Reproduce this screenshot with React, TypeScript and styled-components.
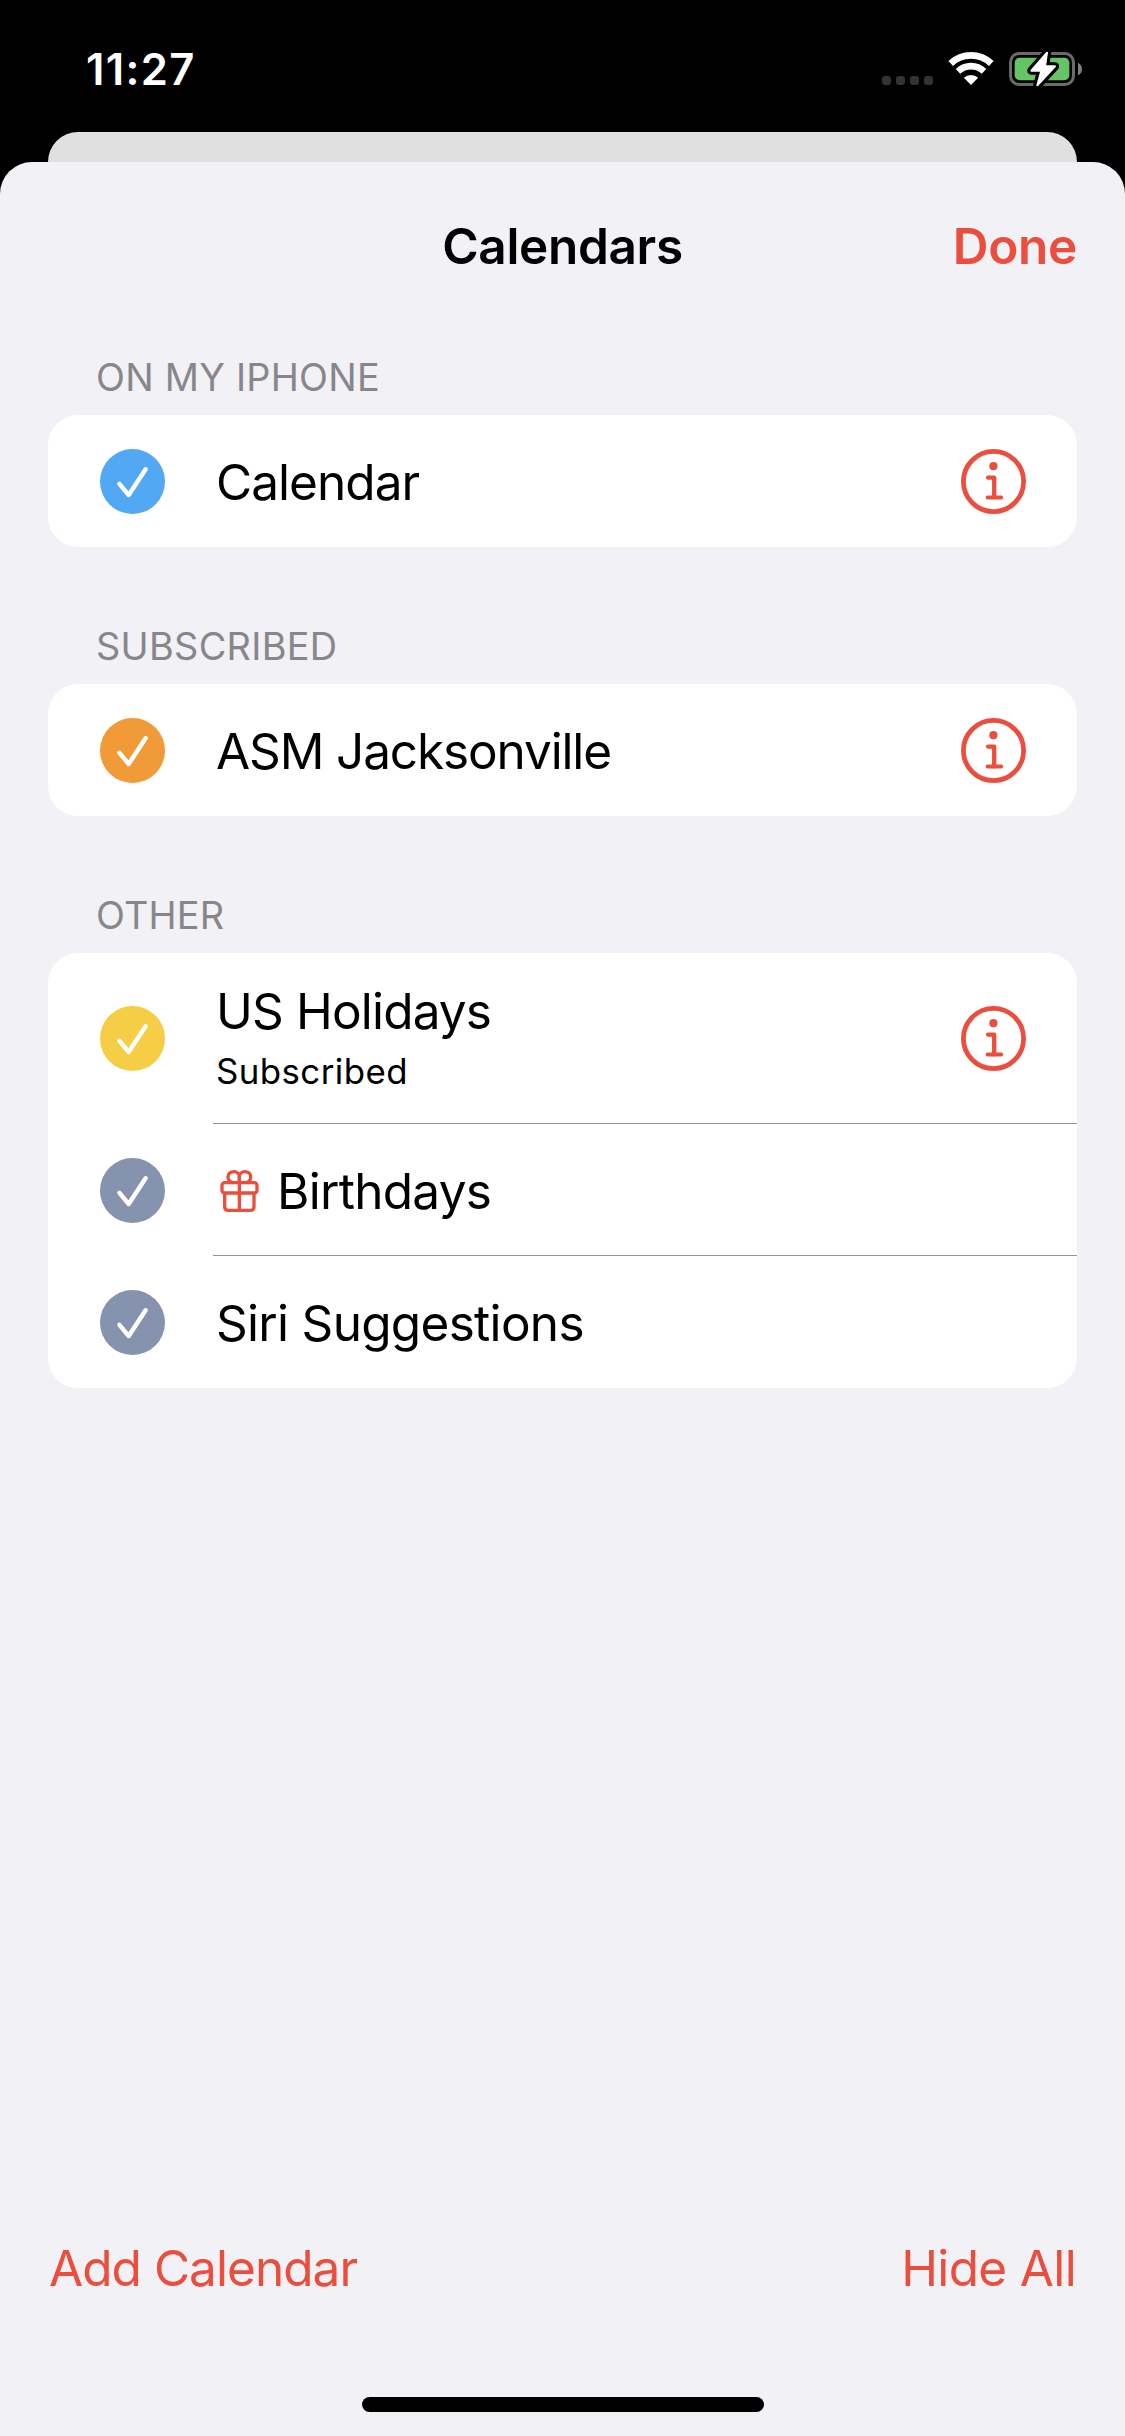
import React from "react";
import styled, { createGlobalStyle } from "styled-components";

const color = {
  accent: "#eb4e3d",
  sheet: "#f1f1f6",
  backCard: "#e0e0e0",
  card: "#ffffff",
  label: "#87868b",
  separator: "#949497",
};

const GlobalStyle = createGlobalStyle`
  * { box-sizing: border-box; }
  body {
    margin: 0;
    background: #000;
    font-family: Inter, "Liberation Sans", sans-serif;
  }
  button {
    border: 0;
    padding: 0;
    background: none;
    font-family: inherit;
    cursor: pointer;
  }
  svg { display: block; flex: none; }
`;

const Screen = styled.div`
  display: flex;
  flex-direction: column;
  width: 1125px;
  height: 2436px;
  overflow: hidden;
  background: #000;
`;

const StatusBar = styled.header`
  display: flex;
  justify-content: space-between;
  align-items: flex-start;
  height: 132px;
  padding: 43px 39px 0 86px;
`;

const Time = styled.time`
  color: #fff;
  font-size: 43.6px;
  font-weight: 600;
  line-height: 53px;
  letter-spacing: 1.35px;
`;

const StatusIcons = styled.div`
  display: flex;
  align-items: flex-start;
  padding-top: 5px;
`;

const SignalDots = styled.div`
  display: flex;
  gap: 5px;
  margin: 28px 15px 0 0;
`;

const Dot = styled.span`
  width: 9px;
  height: 9px;
  border-radius: 3px;
  background: #333;
`;

const WifiSlot = styled.div`
  padding-top: 4px;
  margin-right: 12px;
`;

const BackCard = styled.div`
  flex: none;
  height: 30px;
  margin: 0 48px;
  border-radius: 30px 30px 0 0;
  background: ${color.backCard};
`;

const Sheet = styled.main`
  flex: 1;
  display: flex;
  flex-direction: column;
  border-radius: 32px 32px 0 0;
  background: ${color.sheet};
`;

const SheetHeader = styled.div`
  display: grid;
  grid-template-columns: 1fr auto 1fr;
  padding: 54px 48px 0;
  margin-bottom: 78px;
`;

const Title = styled.h1`
  grid-column: 2;
  margin: 0;
  font-size: 49.5px;
  font-weight: 600;
  line-height: 60px;
  letter-spacing: -0.33px;
`;

const TextButton = styled.button<{ $strong?: boolean; $tracking: number }>`
  justify-self: end;
  color: ${color.accent};
  font-size: 49.5px;
  font-weight: ${(p) => (p.$strong ? 600 : 400)};
  line-height: 60px;
  letter-spacing: ${(p) => p.$tracking}px;
`;

const Sections = styled.div`
  flex: 1;
  display: flex;
  flex-direction: column;
  gap: 76px;
  padding: 0 48px;
`;

const SectionLabel = styled.h2<{ $tracking: number }>`
  margin: 0 0 15px;
  padding-left: 48px;
  color: ${color.label};
  font-size: 37.8px;
  font-weight: 400;
  line-height: 46px;
  letter-spacing: ${(p) => p.$tracking}px;
`;

const Card = styled.ul`
  margin: 0;
  padding: 0;
  list-style: none;
  border-radius: 30px;
  overflow: hidden;
  background: ${color.card};
`;

const RowContent = styled.div`
  flex: 1;
  display: flex;
  align-items: center;
  padding: 0 51px 0 3px;
`;

const Row = styled.li<{ $tall?: boolean }>`
  display: flex;
  height: ${(p) => (p.$tall ? 171 : 132)}px;
  padding-left: 52px;

  & > ${RowContent} {
    padding-top: ${(p) => (p.$tall ? 0 : 1)}px;
  }

  &:not(:last-child) > ${RowContent} {
    box-shadow: inset 0 -1px 0 ${color.separator};
  }
`;

const CheckSlot = styled.div<{ $tall?: boolean }>`
  display: flex;
  align-items: center;
  width: 113px;
  padding-top: ${(p) => (p.$tall ? 0 : 1)}px;
`;

const CheckCircle = styled.span<{ $fill: string }>`
  width: 65px;
  height: 65px;
  border-radius: 50%;
  background: ${(p) => p.$fill};
`;

const Texts = styled.div<{ $tall?: boolean }>`
  flex: 1;
  display: flex;
  flex-direction: column;
  gap: 9px;
  margin: ${(p) => (p.$tall ? "0 0 4px" : "1px 0 0")};
`;

const Name = styled.span<{ $tracking: number }>`
  display: flex;
  align-items: center;
  gap: 18px;
  font-size: 49.5px;
  line-height: 60px;
  letter-spacing: ${(p) => p.$tracking}px;
  white-space: nowrap;
`;

const Detail = styled.span`
  font-size: 34.8px;
  line-height: 42px;
  letter-spacing: 0.45px;
`;

const GiftSlot = styled.span`
  margin: 0 0 1px 3px;
`;

const Footer = styled.footer`
  display: flex;
  justify-content: space-between;
  padding: 0 49px;
`;

const HomeIndicator = styled.div`
  align-self: center;
  width: 402px;
  height: 15px;
  margin: 99px 0 24px;
  border-radius: 8px;
  background: #000;
`;

const WifiIcon = () => (
  <svg width="46" height="33" viewBox="0 0 46 33" fill="none">
    <path d="M2.7 11.5 A29.6 29.6 0 0 1 43.3 11.5" stroke="#fff" strokeWidth="6.8" />
    <path d="M10 19.3 A18.9 18.9 0 0 1 36 19.3" stroke="#fff" strokeWidth="6.6" />
    <path d="M23 33 L15.9 25.8 A10.2 10.2 0 0 1 30.1 25.8 Z" fill="#fff" />
  </svg>
);

const BatteryIcon = () => (
  <svg width="80" height="42" viewBox="0 0 240 126" fill="none">
    <rect x="13.5" y="16.5" width="189" height="93" rx="26" stroke="#6b6b6b" strokeWidth="9" />
    <rect x="26" y="29" width="164" height="68" rx="15" fill="#65c466" />
    <path d="M216 44 C224 48 228 55 228 63 C228 71 224 78 216 82 Z" fill="#808080" />
    <path
      d="M123 14 L76 68 H106 L94 112 L147 55 H117 Z"
      fill="#000"
      stroke="#000"
      strokeWidth="25"
      strokeLinejoin="round"
    />
    <path
      d="M123 14 L76 68 H106 L94 112 L147 55 H117 Z"
      fill="#fff"
      stroke="#fff"
      strokeWidth="6"
      strokeLinejoin="round"
    />
  </svg>
);

const CheckIcon = () => (
  <svg width="65" height="65" viewBox="0 0 65 65" fill="none">
    <path
      d="M19.4 34.8 L28.7 46 L45.6 20.2"
      stroke="#fff"
      strokeWidth="4.4"
      strokeLinecap="round"
      strokeLinejoin="round"
    />
  </svg>
);

const InfoIcon = () => (
  <svg width="65" height="65" viewBox="0 0 65 65" fill="none" stroke={color.accent}>
    <circle cx="32.5" cy="32.5" r="30.1" strokeWidth="4.8" />
    <circle cx="32.4" cy="17.2" r="4.1" fill={color.accent} stroke="none" />
    <path d="M27 28.6 H33.2 V48.4" strokeWidth="4.3" strokeLinecap="round" strokeLinejoin="round" />
    <path d="M26.6 48.5 H40.1" strokeWidth="4" strokeLinecap="round" />
  </svg>
);

const GiftIcon = () => (
  <svg width="40" height="44" viewBox="0 0 120 132" fill="none" stroke={color.accent} strokeWidth="10">
    <rect x="9" y="41" width="105" height="31" rx="8" />
    <path d="M17 72 V113 Q17 124 28 124 H94 Q105 124 105 113 V72" />
    <path d="M61 41 V124" />
    <path d="M61 41 V24 C61 14 54 8 45 8 C34 8 27 14 27 24 C27 34 34 41 45 41" />
    <path d="M61 41 V24 C61 14 68 8 77 8 C88 8 95 14 95 24 C95 34 88 41 77 41" />
  </svg>
);

type Calendar = {
  name: string;
  fill: string;
  tracking: number;
  detail?: string;
  gift?: boolean;
  info?: boolean;
};

type Section = { label: string; tracking: number; calendars: Calendar[] };

const sections: Section[] = [
  {
    label: "ON MY IPHONE",
    tracking: 0.25,
    calendars: [{ name: "Calendar", fill: "#52a8f2", tracking: -0.95, info: true }],
  },
  {
    label: "SUBSCRIBED",
    tracking: 0.32,
    calendars: [{ name: "ASM Jacksonville", fill: "#f19a38", tracking: -1.13, info: true }],
  },
  {
    label: "OTHER",
    tracking: 0.2,
    calendars: [
      { name: "US Holidays", fill: "#f5ce46", tracking: -0.83, detail: "Subscribed", info: true },
      { name: "Birthdays", fill: "#8693ae", tracking: -0.7, gift: true },
      { name: "Siri Suggestions", fill: "#8693ae", tracking: -0.7 },
    ],
  },
];

const CalendarRow = ({ name, fill, tracking, detail, gift, info }: Calendar) => {
  const tall = Boolean(detail);
  return (
    <Row $tall={tall}>
      <CheckSlot $tall={tall}>
        <CheckCircle $fill={fill}>
          <CheckIcon />
        </CheckCircle>
      </CheckSlot>
      <RowContent>
        <Texts $tall={tall}>
          <Name $tracking={tracking}>
            {gift && (
              <GiftSlot>
                <GiftIcon />
              </GiftSlot>
            )}
            {name}
          </Name>
          {detail && <Detail>{detail}</Detail>}
        </Texts>
        {info && (
          <button aria-label={`${name} info`}>
            <InfoIcon />
          </button>
        )}
      </RowContent>
    </Row>
  );
};

export default function App() {
  return (
    <>
      <GlobalStyle />
      <Screen>
        <StatusBar>
          <Time>11:27</Time>
          <StatusIcons>
            <SignalDots>
              <Dot />
              <Dot />
              <Dot />
              <Dot />
            </SignalDots>
            <WifiSlot>
              <WifiIcon />
            </WifiSlot>
            <BatteryIcon />
          </StatusIcons>
        </StatusBar>
        <BackCard />
        <Sheet>
          <SheetHeader>
            <Title>Calendars</Title>
            <TextButton $strong $tracking={-0.3}>
              Done
            </TextButton>
          </SheetHeader>
          <Sections>
            {sections.map((section) => (
              <section key={section.label}>
                <SectionLabel $tracking={section.tracking}>{section.label}</SectionLabel>
                <Card>
                  {section.calendars.map((calendar) => (
                    <CalendarRow key={calendar.name} {...calendar} />
                  ))}
                </Card>
              </section>
            ))}
          </Sections>
          <Footer>
            <TextButton $tracking={-0.95}>Add Calendar</TextButton>
            <TextButton $tracking={-0.65}>Hide All</TextButton>
          </Footer>
          <HomeIndicator />
        </Sheet>
      </Screen>
    </>
  );
}
